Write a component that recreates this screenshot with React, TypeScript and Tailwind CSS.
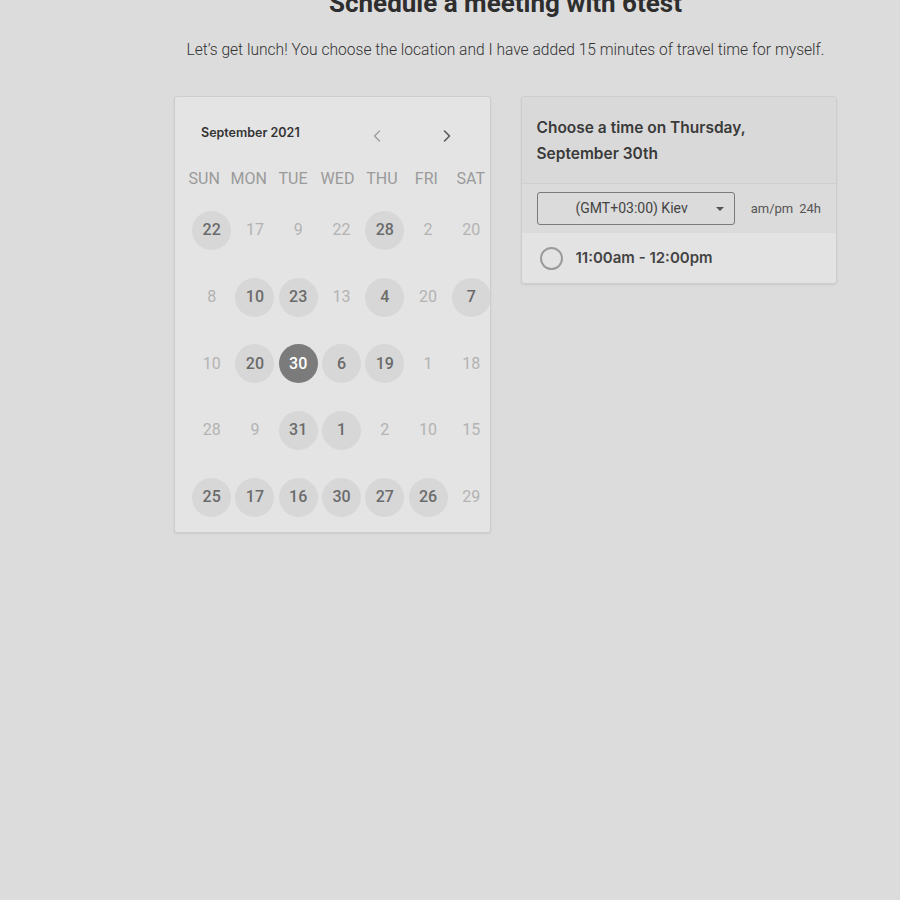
import { ChevronLeft, ChevronRight } from "lucide-react";

type Day = { n: number; on?: boolean; sel?: boolean };

const weekdays = ["SUN", "MON", "TUE", "WED", "THU", "FRI", "SAT"];

// rows exactly as shown in the picker (data is scrambled in the source app)
const weeks: Day[][] = [
  [{ n: 22, on: true }, { n: 17 }, { n: 9 }, { n: 22 }, { n: 28, on: true }, { n: 2 }, { n: 20 }],
  [{ n: 8 }, { n: 10, on: true }, { n: 23, on: true }, { n: 13 }, { n: 4, on: true }, { n: 20 }, { n: 7, on: true }],
  [{ n: 10 }, { n: 20, on: true }, { n: 30, sel: true }, { n: 6, on: true }, { n: 19, on: true }, { n: 1 }, { n: 18 }],
  [{ n: 28 }, { n: 9 }, { n: 31, on: true }, { n: 1, on: true }, { n: 2 }, { n: 10 }, { n: 15 }],
  [{ n: 25, on: true }, { n: 17, on: true }, { n: 16, on: true }, { n: 30, on: true }, { n: 27, on: true }, { n: 26, on: true }, { n: 29 }],
];

const roboto = "font-['Roboto','Liberation_Sans',sans-serif]";
const inter = "font-['Inter','Liberation_Sans',sans-serif]";

function DayCell({ d }: { d: Day }) {
  let cls = "text-[#b3b3b3] font-normal";
  if (d.on) cls = "bg-[#d7d7d7] text-[#6b6b6b] font-medium";
  if (d.sel) cls = "bg-[#7b7b7b] text-white font-medium";
  return (
    <div className="flex h-[66.7px] items-center justify-center">
      <div className={`flex h-[39px] w-[39px] items-center justify-center rounded-full text-[16px] ${cls}`}>
        {d.n}
      </div>
    </div>
  );
}

export default function App() {
  return (
    <div className={`flex min-h-[900px] flex-col bg-[#dcdcdc] ${roboto}`}>
      <div className="ml-[174px] w-[663px]">
        <h1 className="-mt-[13px] text-center text-[26px] font-bold leading-[32px] text-[#2e2e2e]">
          Schedule a meeting with 6test
        </h1>
        <p className="mt-[21px] text-center text-[15.6px] font-light leading-[20px] text-[#333]">
          Let’s get lunch! You choose the location and I have added 15 minutes of travel time for myself.
        </p>

        <div className="mt-[36px] flex items-start gap-[30px]">
          {/* calendar */}
          <div className="h-[437px] w-[317px] overflow-hidden rounded-[3px] border border-[#cdcdcd] bg-[#e4e4e4] shadow-[0_1px_2px_rgba(0,0,0,0.08)]">
            <div className="flex h-[72px] items-center pl-[26px] pr-[33px]">
              <span className={`${inter} text-[12.5px] font-semibold text-[#333]`}>September 2021</span>
              <div className="ml-auto flex items-center gap-[50px] pt-[6px]">
                <ChevronLeft size={20} strokeWidth={1.8} className="text-[#a0a0a0]" />
                <ChevronRight size={20} strokeWidth={1.8} className="text-[#555]" />
              </div>
            </div>
            <div className="ml-[15px] w-[303px]">
              <div className="-ml-[8px] grid grid-cols-7 text-[16px] leading-[20px] text-[#9a9a9a]">
                {weekdays.map((w) => (
                  <div key={w} className="text-center">
                    {w}
                  </div>
                ))}
              </div>
              <div className="mt-[8px] grid grid-cols-7">
                {weeks.flat().map((d, i) => (
                  <DayCell key={i} d={d} />
                ))}
              </div>
            </div>
          </div>

          {/* time slots */}
          <div className="w-[317px] overflow-hidden rounded-[3px] border border-[#cdcdcd] bg-[#e3e3e3] shadow-[0_1px_2px_rgba(0,0,0,0.08)]">
            <div className={`${inter} border-b border-[#cfcfcf] bg-[#d9d9d9] px-[15px] pb-[16px] pt-[18px] text-[15.5px] font-semibold leading-[26px] text-[#3a3a3a]`}>
              Choose a time on Thursday,
              <br />
              September 30th
            </div>
            <div className="flex h-[49px] items-center bg-[#dbdbdb] px-[15px]">
              <div className="relative flex h-[33px] w-[204px] items-center rounded-[3px] border border-[#7a7a7a] pl-[38px] text-[14px] text-[#444]">
                (GMT+03:00) Kiev
                <span className="absolute right-[10px] top-[14px] h-0 w-0 border-x-[4px] border-t-[4px] border-x-transparent border-t-[#555]" />
              </div>
              <span className="ml-[16px] text-[13px] text-[#555]">am/pm</span>
              <span className="ml-[6px] text-[13px] text-[#555]">24h</span>
            </div>
            <div className="flex h-[50px] items-center px-[18px]">
              <span className="h-[23px] w-[23px] rounded-full border-2 border-[#9b9b9b]" />
              <span className={`${inter} ml-[13px] text-[15px] font-semibold text-[#444]`}>11:00am - 12:00pm</span>
            </div>
          </div>
        </div>
      </div>
    </div>
  );
}
